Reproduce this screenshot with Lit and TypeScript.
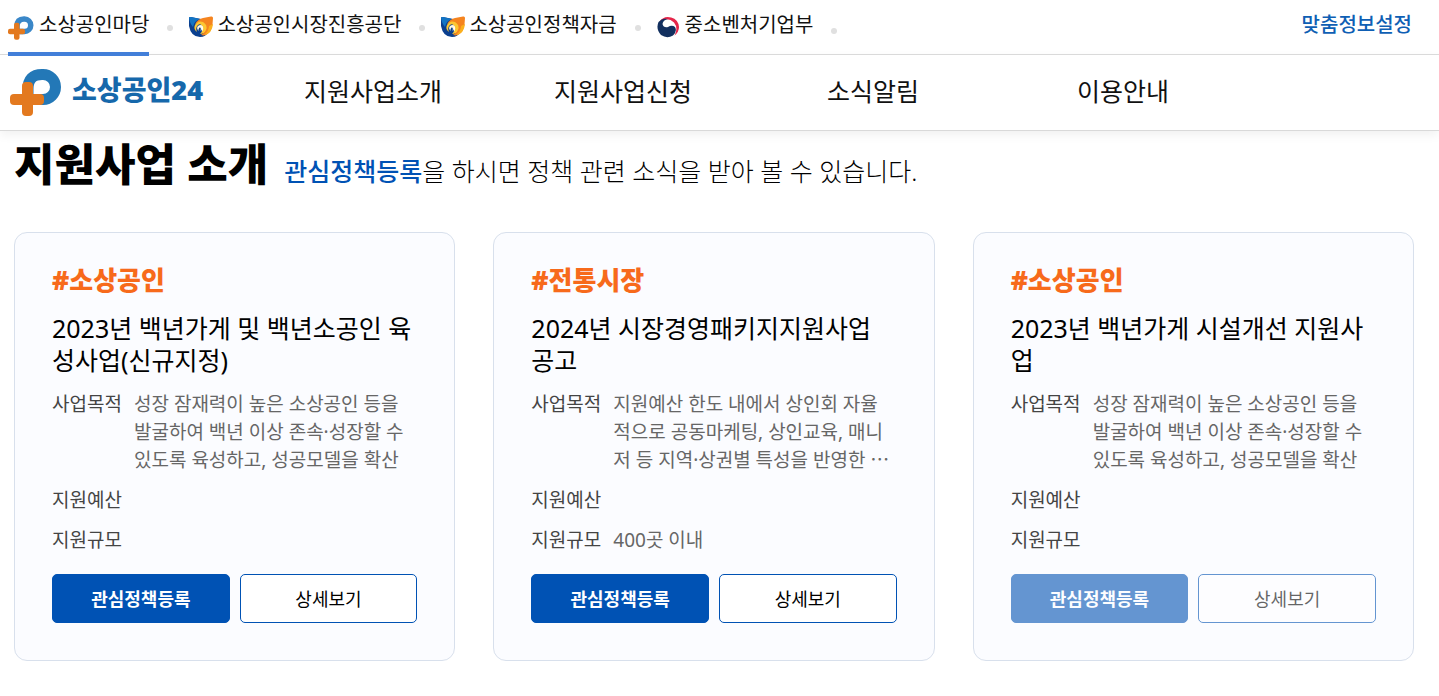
import { LitElement, html, css, svg, nothing } from "lit";
import { customElement } from "lit/decorators.js";

const plusLogo = svg`
  <path d="M18 30 V20 Q18 5.500 32 5.500 H33 A12.500 12.500 0 0 1 33 30.500 H23" fill="none" stroke="currentColor" stroke-width="11"/>
  <rect x="12" y="13" width="11" height="34" rx="4" fill="#e3791f"/>
  <rect x="0" y="25" width="34" height="11" rx="4" fill="#e3791f"/>`;

const semasLogo = html`<svg class="ico" viewBox="0 0 24 22" width="24" height="22" aria-hidden="true">
  <path d="M0 2 Q0 0.500 2 1 L12 3 L13 17 L19 16 Q17 21 11 21 Q2 21 0 10 Z" fill="#0a3f8f"/>
  <path d="M0 2 Q0 0.500 2 1 L11 3 Q5 5 4 11 Q1 8 0 2 Z" fill="#1274c4"/>
  <path d="M24 2 Q24 0 22 0.500 L14 2 Q9 3 6 8 Q13 4 16 9 Q18 15 12 19 Q18 21 22 14 Q24 9 24 2 Z" fill="#f5841f"/>
  <path d="M24 8 Q23 18 15 19 Q20 15 20 10 Z" fill="#fbb01d"/>
  <path d="M6 9 Q9 4 14 6 Q19 9 17 14 Q15 18 11 18 Q15 14 14 11 Q12 7 9 9 Q6 12 8 16 Q4 13 6 9 Z" fill="#fcc632"/>
  <path d="M9 10 Q12 8 13.500 10.500 Q14 13 11.500 15 Q12.500 11 10.500 11.500 Q9 13 9.500 15 Q7 12 9 10 Z" fill="#fff8e0"/>
</svg>`;

const govLogo = html`<svg class="ico" viewBox="0 0 24 22" width="24" height="22" aria-hidden="true">
  <path d="M2.500 5.500 A10.800 10.800 0 0 1 22 11 Q22 16 17.500 19.500 Q21.500 12 17 6.500 Q11 0.500 2.500 5.500 Z" fill="#e6264a"/>
  <path d="M1.500 6 Q5.500 1.500 11 3 Q6 4 5.500 8 Q6.500 12 11 11 Q15 8.500 18 11 Q20.500 15 16 19.500 Q10 23 4 19 Q-1.500 13 1.500 6 Z" fill="#12305f"/>
</svg>`;

interface Program {
  tag: string;
  title: string;
  purpose: string;
  budget: string;
  scale: string;
  closed?: boolean;
}

const programs: Program[] = [
  {
    tag: "#소상공인",
    title: "2023년 백년가게 및 백년소공인 육성사업(신규지정)",
    purpose: "성장 잠재력이 높은 소상공인 등을\n발굴하여 백년 이상 존속·성장할 수\n있도록 육성하고, 성공모델을 확산",
    budget: "",
    scale: "",
  },
  {
    tag: "#전통시장",
    title: "2024년 시장경영패키지지원사업 공고",
    purpose: "지원예산 한도 내에서 상인회 자율\n적으로 공동마케팅, 상인교육, 매니\n저 등 지역·상권별 특성을 반영한 ⋯",
    budget: "",
    scale: "400곳 이내",
  },
  {
    tag: "#소상공인",
    title: "2023년 백년가게 시설개선 지원사업",
    purpose: "성장 잠재력이 높은 소상공인 등을\n발굴하여 백년 이상 존속·성장할 수\n있도록 육성하고, 성공모델을 확산",
    budget: "",
    scale: "",
    closed: true,
  },
];

@customElement("app-root")
export class AppRoot extends LitElement {
  static styles = css`
    :host {
      display: block;
      min-height: 100vh;
      background: #fff;
      color: #111;
      font-family: "Noto Sans", "Noto Sans CJK KR", sans-serif;
    }
    * { box-sizing: border-box; }
    a { color: inherit; text-decoration: none; }
    ul, h1, h2, p, dl, dd { margin: 0; padding: 0; }
    ul { list-style: none; }
    .top {
      display: flex;
      justify-content: space-between;
      height: 55px;
      padding: 0 27px 0 8px;
      border-bottom: 1px solid #dcdcdc;
      font-size: 20px;
      line-height: 50px;
    }
    .sites { display: flex; }
    .sites li { display: flex; }
    .sites li::after {
      content: "";
      width: 6px;
      height: 6px;
      margin: 25px 16px 0 18px;
      border-radius: 50%;
      background: #e0e0e0;
    }
    .sites li:last-child::after { margin-top: 28px; }
    .sites a { display: flex; gap: 4px; height: 56px; }
    .sites .on { gap: 5px; border-bottom: 4px solid #427fd9; }
    .ico { flex: none; margin-top: 16px; }
    .mini { color: #3a87c8; }
    .custom { color: #0f5fb4; font-weight: 500; }
    .main {
      display: flex;
      align-items: center;
      height: 76px;
      border-bottom: 1px solid #d9d9d9;
      box-shadow: 0 4px 10px rgba(0, 0, 0, 0.06);
    }
    .brand {
      display: flex;
      align-items: center;
      flex: 0 0 248px;
      gap: 10px;
      padding-left: 10px;
      color: #1668ab;
      font-size: 27px;
      font-weight: 900;
      line-height: 40px;
    }
    .brand svg { color: #2378b7; }
    .brand span { padding-bottom: 6px; }
    nav { flex: 1; padding-bottom: 4px; }
    .menu { display: flex; font-size: 25px; line-height: 36px; }
    .menu li { flex: 0 1 250px; text-align: center; }
    main { padding: 7px 25px 34px 14px; }
    .heading { display: flex; align-items: baseline; gap: 16px; color: #000; }
    h1 { font-size: 44px; line-height: 52px; font-weight: 900; }
    .lead { font-size: 25px; line-height: 36px; font-weight: 300; }
    .lead strong { color: #0052b4; font-weight: 500; }
    .cards {
      display: grid;
      grid-template-columns: repeat(3, 1fr);
      gap: 38px;
      margin-top: 42px;
    }
    .card {
      display: flex;
      flex-direction: column;
      padding: 28px 37px 37px;
      border: 1px solid #d8e0ec;
      border-radius: 13px;
      background: #fbfcff;
    }
    .tag { color: #f76a1b; font-size: 26px; line-height: 38px; font-weight: 900; }
    h2 { margin-top: 13px; color: #000; font-size: 25px; line-height: 32px; font-weight: 400; }
    dl {
      display: grid;
      grid-template-columns: 70px 1fr;
      gap: 12px;
      margin-top: 14px;
      font-size: 19px;
      line-height: 28px;
    }
    dt { color: #444; }
    dd { color: #666; white-space: pre-line; }
    .actions { display: grid; grid-template-columns: 1fr 1fr; gap: 10px; margin-top: 20px; }
    button {
      height: 49px;
      padding: 0;
      border: 1px solid #0052b4;
      border-radius: 5px;
      background: #fff;
      color: #000;
      font: 400 18px/26px "Noto Sans", "Noto Sans CJK KR", sans-serif;
      cursor: pointer;
    }
    .primary { background: #0052b4; color: #fff; font-weight: 700; }
    .closed button { opacity: 0.6; }
  `;

  render() {
    return html`
      <header>
        <div class="top">
          <ul class="sites">
            <li><a class="on" href="#"><svg class="ico mini" viewBox="0 0 52 47" width="26" height="24" aria-hidden="true">${plusLogo}</svg>소상공인마당</a></li>
            <li><a href="#">${semasLogo}소상공인시장진흥공단</a></li>
            <li><a href="#">${semasLogo}소상공인정책자금</a></li>
            <li><a href="#">${govLogo}중소벤처기업부</a></li>
          </ul>
          <a class="custom" href="#">맞춤정보설정</a>
        </div>
        <div class="main">
          <a class="brand" href="#"><svg viewBox="0 0 52 47" width="52" height="47" aria-hidden="true">${plusLogo}</svg><span>소상공인24</span></a>
          <nav>
            <ul class="menu">
              ${["지원사업소개", "지원사업신청", "소식알림", "이용안내"].map((m) => html`<li><a href="#">${m}</a></li>`)}
            </ul>
          </nav>
        </div>
      </header>
      <main>
        <div class="heading">
          <h1>지원사업 소개</h1>
          <p class="lead"><strong>관심정책등록</strong>을 하시면 정책 관련 소식을 받아 볼 수 있습니다.</p>
        </div>
        <div class="cards">
          ${programs.map((p) => html`
            <article class="card ${p.closed ? "closed" : ""}">
              <p class="tag">${p.tag}</p>
              <h2>${p.title}</h2>
              <dl>
                <dt>사업목적</dt><dd>${p.purpose}</dd>
                <dt>지원예산</dt><dd>${p.budget || nothing}</dd>
                <dt>지원규모</dt><dd>${p.scale || nothing}</dd>
              </dl>
              <div class="actions">
                <button class="primary" type="button">관심정책등록</button>
                <button type="button">상세보기</button>
              </div>
            </article>`)}
        </div>
      </main>`;
  }
}
